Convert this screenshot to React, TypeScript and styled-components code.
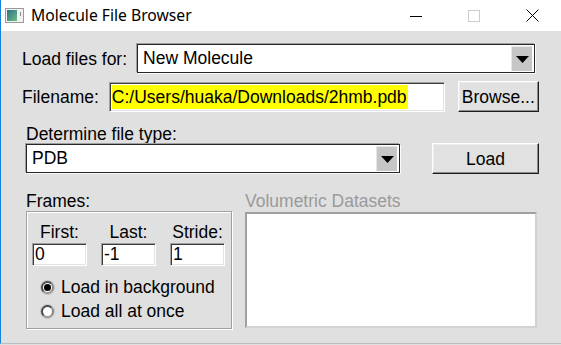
import styled, { createGlobalStyle } from "styled-components";

const GlobalStyle = createGlobalStyle`
  html, body {
    margin: 0;
    padding: 0;
    background: #e0e0e0;
  }
  * {
    box-sizing: border-box;
  }
`;

const Window = styled.div`
  width: 561px;
  height: 344px;
  border-left: 1px solid #1883d7;
  border-bottom: 1px solid #bcbcbc;
  background: #e0e0e0;
  font-family: "Liberation Sans", Arial, sans-serif;
  font-size: 17.5px;
  color: #000;
  overflow: hidden;
`;

const TitleBar = styled.div`
  height: 31px;
  background: #fff;
  display: flex;
  align-items: center;
  padding-left: 4px;
`;

const TitleText = styled.div`
  font-family: "Noto Sans", "Open Sans", sans-serif;
  font-size: 15.7px;
  margin-left: 7px;
  margin-top: -1px;
  color: #000;
  flex: 1;
`;

const Controls = styled.div`
  display: flex;
  align-items: center;
  height: 100%;
`;

const ControlButton = styled.div`
  width: 58px;
  height: 100%;
  display: flex;
  align-items: center;
  justify-content: center;
`;

const Content = styled.div`
  padding-top: 13px;
`;

const Row = styled.div<{ $top?: number; $left?: number }>`
  display: flex;
  align-items: center;
  margin-top: ${({ $top }) => $top ?? 0}px;
  padding-left: ${({ $left }) => $left ?? 0}px;
`;

const Label = styled.div<{ $muted?: boolean }>`
  line-height: 20px;
  height: 20px;
  white-space: nowrap;
  color: ${({ $muted }) => ($muted ? "#9a9a9a" : "#000")};
`;

const Combo = styled.div<{ $width: number; $left?: number }>`
  width: ${({ $width }) => $width}px;
  height: 29px;
  margin-left: ${({ $left }) => $left ?? 0}px;
  background: #fff;
  border: 1px solid #262626;
  box-shadow: -1px -1px 0 #a0a0a0, 1px 1px 0 #fbfbfb;
  display: flex;
  align-items: stretch;
  padding: 1px 2px 1px 5px;
`;

const ComboText = styled.div`
  flex: 1;
  line-height: 25px;
`;

const ComboArrow = styled.div`
  width: 21px;
  background: #c6c6c6;
  border-left: 1px solid #e6e6e6;
  border-top: 1px solid #e6e6e6;
  display: flex;
  align-items: center;
  justify-content: center;
`;

const Entry = styled.div<{ $width: number; $height: number; $left?: number }>`
  width: ${({ $width }) => $width}px;
  height: ${({ $height }) => $height}px;
  margin-left: ${({ $left }) => $left ?? 0}px;
  background: #fff;
  border: 1px solid;
  border-color: #a0a0a0 #fff #fff #a0a0a0;
  box-shadow: inset 1px 1px 0 #3c3c3c, inset -1px -1px 0 #e3e3e3;
  padding-left: 2px;
  display: flex;
  align-items: center;
  white-space: nowrap;
  overflow: hidden;
`;

const Selected = styled.span`
  background: #ffff00;
  line-height: 24px;
  padding-right: 1px;
`;

const Button = styled.div<{ $width: number; $left?: number }>`
  width: ${({ $width }) => $width}px;
  height: 31px;
  margin-left: ${({ $left }) => $left ?? 0}px;
  background: #e1e1e1;
  border: 1px solid;
  border-color: #fdfdfd #1e1e1e #1e1e1e #fdfdfd;
  box-shadow: inset -1px -1px 0 #8c8c8c, inset 1px 1px 0 #ececec;
  display: flex;
  align-items: center;
  justify-content: center;
  line-height: 20px;
`;

const TypeRow = styled.div`
  display: flex;
  align-items: flex-end;
  margin-top: 12px;
  padding-left: 25px;
`;

const Column = styled.div<{ $width: number }>`
  width: ${({ $width }) => $width}px;
  display: flex;
  flex-direction: column;
`;

const LoadButton = styled(Button)`
  margin-bottom: -1px;
`;

const BottomRow = styled.div`
  display: flex;
  margin-top: 18px;
  padding-left: 25px;
  gap: 13px;
`;

const GroupBox = styled.div`
  height: 118px;
  border: 1px solid #a0a0a0;
  box-shadow: inset 1px 1px 0 #fff, 1px 1px 0 #fff;
  padding: 10px 0 0 5px;
`;

const FrameGrid = styled.div`
  display: grid;
  grid-template-columns: repeat(3, 55px);
  column-gap: 14px;
  row-gap: 1px;
  text-align: center;
`;

const RadioList = styled.div`
  margin-top: 9px;
  padding-left: 9px;
`;

const RadioRow = styled.div`
  display: flex;
  align-items: center;
  height: 24.5px;
`;

const RadioDot = styled.span<{ $checked?: boolean }>`
  width: 13px;
  height: 13px;
  border-radius: 50%;
  background: #fff;
  border: 2px solid #4a4a4a;
  border-right-color: #8a8a8a;
  border-bottom-color: #9a9a9a;
  box-shadow: 0 0 0 1px #c4c4c4;
  margin-right: 7px;
  display: flex;
  align-items: center;
  justify-content: center;
  &::after {
    content: "";
    width: 7px;
    height: 7px;
    border-radius: 50%;
    background: ${({ $checked }) => ($checked ? "#000" : "transparent")};
  }
`;

const ListBox = styled.div`
  width: 292px;
  height: 116px;
  margin-top: 1px;
  background: #fff;
  border: 2px solid;
  border-color: #a0a0a0 #d2d2d2 #d2d2d2 #a0a0a0;
`;

function Arrow() {
  return (
    <svg width="13" height="7" viewBox="0 0 13 7">
      <polygon points="0,0 13,0 6.5,7" fill="#000" />
    </svg>
  );
}

function AppIcon() {
  return (
    <svg width="19" height="15" viewBox="0 0 19 15">
      <defs>
        <linearGradient id="g" x1="0" y1="0" x2="1" y2="1">
          <stop offset="0" stopColor="#2c6f8c" />
          <stop offset="1" stopColor="#6cbf7c" />
        </linearGradient>
      </defs>
      <rect x="0.5" y="0.5" width="18" height="14" fill="#f2f2f2" stroke="#9a9a9a" />
      <rect x="2" y="2" width="10" height="11" fill="url(#g)" />
      <rect x="15" y="4" width="1" height="4" fill="#8a8a8a" />
    </svg>
  );
}

export default function App() {
  return (
    <>
      <GlobalStyle />
      <Window>
        <TitleBar>
          <AppIcon />
          <TitleText>Molecule File Browser</TitleText>
          <Controls>
            <ControlButton>
              <svg width="12" height="12" viewBox="0 0 12 12">
                <line x1="0" y1="6.5" x2="12" y2="6.5" stroke="#000" />
              </svg>
            </ControlButton>
            <ControlButton>
              <svg width="12" height="12" viewBox="0 0 12 12">
                <rect x="0.5" y="0.5" width="11" height="11" fill="none" stroke="#cccccc" />
              </svg>
            </ControlButton>
            <ControlButton>
              <svg width="13" height="13" viewBox="0 0 13 13">
                <line x1="0.5" y1="0.5" x2="12.5" y2="12.5" stroke="#000" />
                <line x1="12.5" y1="0.5" x2="0.5" y2="12.5" stroke="#000" />
              </svg>
            </ControlButton>
          </Controls>
        </TitleBar>
        <Content>
          <Row $left={21}>
            <Label>Load files for:</Label>
            <Combo $width={398} $left={10}>
              <ComboText>New Molecule</ComboText>
              <ComboArrow>
                <Arrow />
              </ComboArrow>
            </Combo>
          </Row>
          <Row $top={8} $left={21}>
            <Label>Filename:</Label>
            <Entry $width={336} $height={30} $left={10}>
              <Selected>C:/Users/huaka/Downloads/2hmb.pdb</Selected>
            </Entry>
            <Button $width={81} $left={13}>
              Browse...
            </Button>
          </Row>
          <TypeRow>
            <Column $width={374}>
              <Label>Determine file type:</Label>
              <Combo $width={374}>
                <ComboText>PDB</ComboText>
                <ComboArrow>
                  <Arrow />
                </ComboArrow>
              </Combo>
            </Column>
            <LoadButton $width={107} $left={32}>
              Load
            </LoadButton>
          </TypeRow>
          <BottomRow>
            <Column $width={206}>
              <Label>Frames:</Label>
              <GroupBox>
                <FrameGrid>
                  <Label>First:</Label>
                  <Label>Last:</Label>
                  <Label>Stride:</Label>
                  <Entry $width={55} $height={23}>0</Entry>
                  <Entry $width={55} $height={23}>-1</Entry>
                  <Entry $width={55} $height={23}>1</Entry>
                </FrameGrid>
                <RadioList>
                  <RadioRow>
                    <RadioDot $checked />
                    Load in background
                  </RadioRow>
                  <RadioRow>
                    <RadioDot />
                    Load all at once
                  </RadioRow>
                </RadioList>
              </GroupBox>
            </Column>
            <Column $width={292}>
              <Label $muted>Volumetric Datasets</Label>
              <ListBox />
            </Column>
          </BottomRow>
        </Content>
      </Window>
    </>
  );
}
